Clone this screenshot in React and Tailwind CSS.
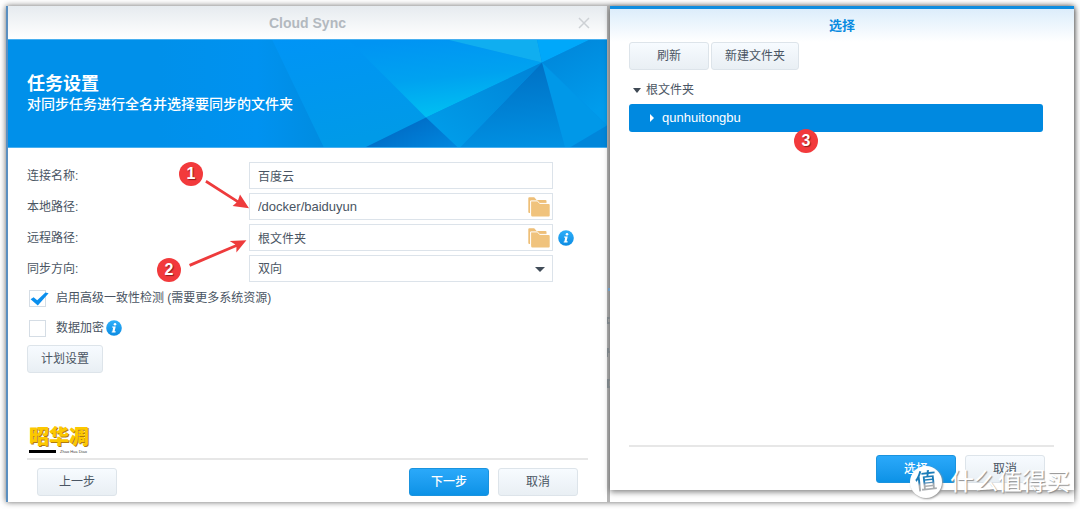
import { useState } from 'react'

const plainButton =
  'h-7 rounded-[3px] border border-[#dde4ea] bg-linear-to-b from-[#f7fbff] to-[#e9eff4] text-xs text-[#4a5563] cursor-pointer'
const primaryButton =
  'h-7 rounded-[3px] border border-[#1a93de] bg-linear-to-b from-[#2aa9fa] to-[#0b92e6] text-xs font-medium text-white cursor-pointer'
const field =
  'h-[27px] w-full appearance-none rounded-none border border-[#dce3ea] bg-white px-2 text-[#4a5563] outline-none'

function FolderIcon() {
  return (
    <svg viewBox="0 0 22 20" className="block h-5 w-[22px]" aria-hidden="true">
      <path
        d="M0.3 1.3Q0.3 0.3 1.3 0.3H6.2L8.6 2.9H17.5Q18.5 2.9 18.5 4V9H2.5V16H1.3Q0.3 16 0.3 15Z"
        fill="#eebf78"
      />
      <path
        d="M2.2 4.9Q2.2 3.9 3.2 3.9H8.6L11.6 7.1H20.7Q21.7 7.1 21.7 8.1V18.6Q21.7 19.6 20.7 19.6H4.2Q3.2 19.6 3.2 18.6Z"
        fill="#f0c37d"
      />
      <path d="M2.6 16V3.9H9.2L11.8 6.4H19" fill="none" stroke="#fff" strokeWidth="1" />
    </svg>
  )
}

function InfoIcon() {
  return (
    <svg viewBox="0 0 16 16" className="block size-4 shrink-0" role="img" aria-label="info">
      <defs>
        <linearGradient id="info" x1="0" y1="0" x2="0" y2="1">
          <stop offset="0" stopColor="#2fb0fa" />
          <stop offset="1" stopColor="#0b8be2" />
        </linearGradient>
      </defs>
      <circle cx="8" cy="8" r="7.8" fill="url(#info)" />
      <circle cx="9" cy="4.3" r="1.3" fill="#fff" />
      <path d="M6.2 6.4H9.7L8.6 11.2H9.7L9.5 12.4H5.6L5.8 11.4H6.4L7.2 7.6H6Z" fill="#fff" />
    </svg>
  )
}

function BannerArt() {
  return (
    <svg
      viewBox="0 0 599 108"
      preserveAspectRatio="xMaxYMid slice"
      className="absolute inset-0 h-full w-full"
      aria-hidden="true"
    >
      <defs>
        <linearGradient id="g1" x1="0" y1="0" x2="0.3" y2="1">
          <stop offset="0" stopColor="#0094f6" />
          <stop offset="1" stopColor="#009ae8" />
        </linearGradient>
        <linearGradient id="g2" x1="0.3" y1="0" x2="0.55" y2="1">
          <stop offset="0" stopColor="#0094f3" />
          <stop offset="0.5" stopColor="#00a2f0" />
          <stop offset="1" stopColor="#00c2f2" />
        </linearGradient>
        <linearGradient id="g3" x1="1" y1="0" x2="0" y2="1">
          <stop offset="0" stopColor="#0082d6" />
          <stop offset="1" stopColor="#00a0ec" />
        </linearGradient>
        <linearGradient id="g4" x1="0.5" y1="0" x2="0.6" y2="1">
          <stop offset="0" stopColor="#0070c4" />
          <stop offset="1" stopColor="#0090e2" />
        </linearGradient>
        <linearGradient id="g5" x1="0" y1="0.3" x2="1" y2="1">
          <stop offset="0" stopColor="#0066c0" />
          <stop offset="1" stopColor="#0088e0" />
        </linearGradient>
        <linearGradient id="g6" x1="0" y1="0" x2="0.4" y2="1">
          <stop offset="0" stopColor="#0084d8" />
          <stop offset="1" stopColor="#009cec" />
        </linearGradient>
        <linearGradient id="g0" x1="0" y1="0" x2="1" y2="0">
          <stop offset="0" stopColor="#0090ea" />
          <stop offset="0.6" stopColor="#0092f0" />
          <stop offset="1" stopColor="#008ce0" />
        </linearGradient>
      </defs>
      <rect width="599" height="108" fill="#0090ea" />
      <polygon points="150,0 264,0 316,108 150,108" fill="url(#g0)" />
      <polygon points="264,0 346,0 418,78 357,108 316,108" fill="url(#g1)" />
      <polygon points="340,0 439,0 534,23 418,78" fill="url(#g2)" />
      <polygon points="439,0 529,0 534,23" fill="#10aef0" />
      <polygon points="529,0 582,0 534,23" fill="#00a8fa" />
      <polygon points="582,0 599,0 599,86 534,23" fill="url(#g6)" />
      <polygon points="534,23 599,86 562,108 557,108" fill="#0098e8" />
      <polygon points="599,86 599,108 562,108" fill="#0086da" />
      <polygon points="534,23 557,108 452,108" fill="url(#g4)" />
      <polygon points="534,23 452,108 449,108 418,78" fill="url(#g3)" />
      <polygon points="418,78 450,108 357,108" fill="url(#g5)" />
    </svg>
  )
}

function Row({ id, label, children, after }) {
  return (
    <div className="flex items-center">
      <label htmlFor={id} className="w-[222px] shrink-0">
        {label}
      </label>
      <div className="relative w-[304px]">{children}</div>
      {after && <div className="ml-[5px]">{after}</div>}
    </div>
  )
}

function PathField({ id, value, size }) {
  return (
    <>
      <input id={id} defaultValue={value} className={`${field} ${size} pr-8`} />
      <button type="button" aria-label="浏览" className="absolute top-1 right-[3px] cursor-pointer">
        <FolderIcon />
      </button>
    </>
  )
}

function Tick({ id, label, checked, onChange, after }) {
  return (
    <div className="flex h-[18px] items-center">
      <span className="relative ml-[2px] mr-[10px] block size-[17px]">
        <input
          id={id}
          type="checkbox"
          checked={checked}
          onChange={onChange}
          className="block size-[17px] appearance-none border border-[#d5dde5] bg-white"
        />
        {checked && (
          <svg viewBox="0 0 18 18" className="pointer-events-none absolute inset-0 size-[18px] overflow-visible" aria-hidden="true">
            <path d="M1.6 9.2L4.6 7.2L8.2 10.2L16.4 2.6L19.6 3.2L8.8 15.6Z" fill="#0a8fee" />
          </svg>
        )}
      </span>
      <label htmlFor={id}>{label}</label>
      {after && <span className="ml-[2px]">{after}</span>}
    </div>
  )
}

function Marker({ n, className }) {
  return (
    <span
      className={`absolute flex size-6 items-center justify-center rounded-full bg-[#f23a3c] text-base font-bold text-white [text-shadow:1px_1px_1px_#8c1c1c] ${className}`}
    >
      {n}
    </span>
  )
}

function Arrows() {
  return (
    <svg viewBox="0 0 100 100" className="pointer-events-none absolute top-[28px] left-[180px] h-[100px] w-[100px]" aria-hidden="true">
      <g transform="translate(-188 -176)" fill="#ee3b3c">
        <path d="M206.6 180L238 200.2L240 194.4L249 208.2L232.6 206L236.6 202.6L205.2 182.4Z" />
        <path d="M189 264L235.4 244.4L229.6 241L246.4 240.2L236.4 252.6L236.4 246.9L190.2 266.8Z" />
      </g>
    </svg>
  )
}

function SyncWindow() {
  const [strict, setStrict] = useState(true)
  const [encrypt, setEncrypt] = useState(false)
  return (
    <section className="flex min-w-0 flex-col border-l-2 border-[#5a8fc0] bg-white">
      <header className="relative flex h-[33px] items-center justify-center bg-linear-to-b from-[#e6ebef] to-white">
        <h1 className="text-sm font-bold text-[#b3b9bf]">Cloud Sync</h1>
        <button type="button" aria-label="关闭" className="absolute right-[17px] cursor-pointer">
          <svg viewBox="0 0 12 12" className="block size-3" aria-hidden="true">
            <path d="M1 1L11 11M11 1L1 11" stroke="#cdd1d5" strokeWidth="1.5" />
          </svg>
        </button>
      </header>
      <div className="relative h-[109px] border-y border-[#49b0f0] bg-[#0090ea] text-white">
        <BannerArt />
        <div className="relative px-[19px] pt-8">
          <h2 className="text-lg leading-6 font-bold">任务设置</h2>
          <p className="text-sm leading-4 font-medium">对同步任务进行全名并选择要同步的文件夹</p>
        </div>
      </div>
      <form className="relative flex flex-1 flex-col px-[19px] pt-[14px]" onSubmit={(e) => e.preventDefault()}>
        <div className="flex flex-col gap-1">
          <Row id="name" label="连接名称:">
            <input id="name" defaultValue="百度云" className={field} />
          </Row>
          <Row id="local" label="本地路径:">
            <PathField id="local" value="/docker/baiduyun" size="text-[13px]" />
          </Row>
          <Row id="remote" label="远程路径:" after={<InfoIcon />}>
            <PathField id="remote" value="根文件夹" size="text-xs" />
          </Row>
          <Row id="direction" label="同步方向:">
            <select id="direction" className={field}>
              <option>双向</option>
            </select>
            <svg viewBox="0 0 10 5" className="pointer-events-none absolute top-3 right-2 h-[5px] w-[10px]" aria-hidden="true">
              <path d="M0 0H10L5 5Z" fill="#414c58" />
            </svg>
          </Row>
        </div>
        <div className="mt-[7px] flex flex-col gap-3">
          <Tick
            id="strict"
            label="启用高级一致性检测 (需要更多系统资源)"
            checked={strict}
            onChange={() => setStrict(!strict)}
          />
          <Tick
            id="encrypt"
            label="数据加密"
            checked={encrypt}
            onChange={() => setEncrypt(!encrypt)}
            after={<InfoIcon />}
          />
        </div>
        <button type="button" className={`${plainButton} mt-2 w-[76px]`}>
          计划设置
        </button>
        <div className="mt-auto w-16 pl-[2px] pb-1">
          <div className="text-xl leading-6 font-black whitespace-nowrap text-[#fcc800] [text-shadow:1px_1px_0_#b07a10]">
            昭华凋
          </div>
          <div className="flex items-center gap-1">
            <span className="h-[3px] w-[27px] shrink-0 bg-black" />
            <span className="text-[4px] leading-[5px] whitespace-nowrap text-[#444]">Zhao Hua Diao</span>
          </div>
        </div>
        <footer className="flex gap-[9px] border-t-2 border-[#e7e7e7] px-[10px] pt-2 pb-[6px]">
          <button type="button" className={`${plainButton} mr-auto w-20`}>
            上一步
          </button>
          <button type="submit" className={`${primaryButton} w-20`}>
            下一步
          </button>
          <button type="button" className={`${plainButton} w-20`}>
            取消
          </button>
        </footer>
        <Marker n={1} className="top-[14px] left-[171px]" />
        <Marker n={2} className="top-[110px] left-[149px]" />
        <Arrows />
      </form>
    </section>
  )
}

function PickerDialog() {
  return (
    <section className="flex flex-1 flex-col border-t-[3px] border-[#0e8de0] bg-white shadow-[0_2px_6px_rgba(0,0,0,0.5)]">
      <header className="flex h-[33px] items-center justify-center bg-linear-to-b from-[#dcedfb] to-white">
        <h2 className="text-[13px] font-bold text-[#0a8be0]">选择</h2>
      </header>
      <div className="flex flex-1 flex-col px-[19px]">
        <div className="flex gap-[2px]">
          <button type="button" className={`${plainButton} w-20`}>
            刷新
          </button>
          <button type="button" className={`${plainButton} w-[88px]`}>
            新建文件夹
          </button>
        </div>
        <ul className="relative mt-[6px] mr-3">
          <li>
            <button type="button" className="flex h-7 w-full cursor-pointer items-center gap-[5px] pl-1">
              <svg viewBox="0 0 8 5" className="h-[5px] w-2" aria-hidden="true">
                <path d="M0 0H8L4 5Z" fill="#3f4954" />
              </svg>
              根文件夹
            </button>
            <ul>
              <li>
                <button
                  type="button"
                  className="flex h-7 w-full cursor-pointer items-center gap-2 rounded-[3px] bg-[#0089e0] pl-[21px] text-[13px] text-white"
                >
                  <svg viewBox="0 0 4 8" className="h-2 w-1" aria-hidden="true">
                    <path d="M0 0L4 4L0 8Z" fill="#fff" />
                  </svg>
                  qunhuitongbu
                </button>
              </li>
            </ul>
          </li>
          <Marker n={3} className="top-[53px] left-[165px]" />
        </ul>
      </div>
      <footer className="mr-5 ml-[19px] flex justify-end gap-[9px] border-t-2 border-[#e7e7e7] px-[9px] pt-2 pb-[7px]">
        <button type="button" className={`${primaryButton} w-20`}>
          选择
        </button>
        <button type="button" className={`${plainButton} w-20`}>
          取消
        </button>
      </footer>
    </section>
  )
}

function Watermark() {
  return (
    <div className="pointer-events-none absolute right-1 bottom-1 flex items-center gap-2 text-white">
      <span className="flex size-8 items-center justify-center rounded-full bg-white shadow-[1px_1px_2px_#999]">
        <span className="-rotate-6 bg-linear-to-b from-[#1c7cb8] from-50% to-[#a9adb0] to-60% bg-clip-text text-[22px] leading-8 font-medium text-transparent">
          值
        </span>
      </span>
      <span className="text-2xl leading-8 whitespace-nowrap [text-shadow:1px_1px_1px_#8f8f8f]">
        什么值得买
      </span>
    </div>
  )
}

function EdgeMarks() {
  return (
    <svg viewBox="0 0 3 110" className="absolute top-[282px] -left-[3px] h-[110px] w-[3px]" aria-hidden="true">
      <path d="M1 0H3V3H1Z" fill="#6f9cc4" />
      <path d="M0 29H3V31H1V34H3V36H0ZM0 60H2V63H3V65H1V69H0ZM0 91H3V93H2V98H3V100H0Z" fill="#7d8488" />
    </svg>
  )
}

export default function App() {
  return (
    <main className="flex min-h-screen flex-col bg-white px-[6px] pt-[6px] pb-[7px] font-['Liberation_Sans','Noto_Sans_CJK_SC',sans-serif] text-xs text-[#4a5563]">
      <div className="relative grid flex-1 grid-cols-[601fr_467fr] bg-white shadow-[0_0_6px_rgba(0,0,0,0.6)]">
        <SyncWindow />
        <div className="relative flex min-w-0 flex-col border-l-[3px] border-[#b4b4b4] pb-3">
          <PickerDialog />
          <EdgeMarks />
        </div>
        <Watermark />
      </div>
    </main>
  )
}
